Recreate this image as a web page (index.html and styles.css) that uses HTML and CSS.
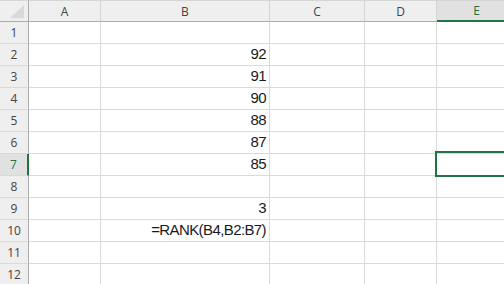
FILE: index.html
```html
<!DOCTYPE html>
<html lang="en">
<head>
  <meta charset="UTF-8" />
  <title>Sheet1</title>
  <link rel="stylesheet" href="styles.css">
</head>
<body>

  <div class="sheet">
    <!-- column headers -->
    <div class="corner">
      <svg width="15" height="14" viewBox="0 0 15 14"><polygon points="14,0 14,13 0,13" fill="#d9d9d9"/></svg>
    </div>
    <div class="col-head">A</div>
    <div class="col-head">B</div>
    <div class="col-head">C</div>
    <div class="col-head">D</div>
    <div class="col-head active">E</div>

    <div class="row-head">1</div><div class="cell"></div><div class="cell"></div><div class="cell"></div><div class="cell"></div><div class="cell"></div>
    <div class="row-head">2</div><div class="cell"></div><div class="cell num">92</div><div class="cell"></div><div class="cell"></div><div class="cell"></div>
    <div class="row-head">3</div><div class="cell"></div><div class="cell num">91</div><div class="cell"></div><div class="cell"></div><div class="cell"></div>
    <div class="row-head">4</div><div class="cell"></div><div class="cell num">90</div><div class="cell"></div><div class="cell"></div><div class="cell"></div>
    <div class="row-head">5</div><div class="cell"></div><div class="cell num">88</div><div class="cell"></div><div class="cell"></div><div class="cell"></div>
    <div class="row-head">6</div><div class="cell"></div><div class="cell num">87</div><div class="cell"></div><div class="cell"></div><div class="cell"></div>
    <div class="row-head active">7</div><div class="cell"></div><div class="cell num">85</div><div class="cell"></div><div class="cell"></div><div class="cell selected"></div>
    <div class="row-head">8</div><div class="cell"></div><div class="cell"></div><div class="cell"></div><div class="cell"></div><div class="cell"></div>
    <div class="row-head">9</div><div class="cell"></div><div class="cell num">3</div><div class="cell"></div><div class="cell"></div><div class="cell"></div>
    <div class="row-head">10</div><div class="cell"></div><div class="cell num">=RANK(B4,B2:B7)</div><div class="cell"></div><div class="cell"></div><div class="cell"></div>
    <div class="row-head">11</div><div class="cell"></div><div class="cell"></div><div class="cell"></div><div class="cell"></div><div class="cell"></div>
    <div class="row-head">12</div><div class="cell"></div><div class="cell"></div><div class="cell"></div><div class="cell"></div><div class="cell"></div>
  </div>

</body>
</html>
```

FILE: styles.css
```css
* {
  margin: 0;
  padding: 0;
  box-sizing: border-box;
}

body {
  background: #fff;
  width: 504px;
  height: 284px;
  overflow: hidden;
  font-family: 'Liberation Sans', Arial, sans-serif;
}

.sheet {
  display: grid;
  grid-template-columns: 29px 72px 169px 95px 72px 80px;
  grid-template-rows: 22px;
  grid-auto-rows: 22px;
}

/* headers */
.corner,
.col-head {
  background: #efefef;
  border-top: 1px solid #d6d6d6;
  border-bottom: 1px solid #ababab;
}

.corner {
  border-right: 1px solid #ababab;
  display: flex;
  align-items: flex-end;
  justify-content: flex-end;
  padding: 0 3px 2px 0;
}

.corner svg {
  display: block;
}

.col-head {
  border-right: 1px solid #d4d4d4;
  display: flex;
  align-items: center;
  justify-content: center;
  font-family: 'Open Sans', sans-serif;
  font-size: 12px;
  color: #444;
}

.col-head.active {
  background: #e1e1e1;
  border-bottom: 2px solid #217346;
  color: #217346;
}

.row-head {
  background: #efefef;
  border-right: 1px solid #ababab;
  border-bottom: 1px solid #d9d9d9;
  display: flex;
  align-items: center;
  justify-content: center;
  font-family: 'Open Sans', sans-serif;
  font-size: 12px;
  color: #444;
}

.row-head.active {
  background: #e1e1e1;
  border-right: 2px solid #217346;
  color: #217346;
}

/* cells */
.cell {
  border-right: 1px solid #dadada;
  border-bottom: 1px solid #dadada;
  font-size: 15px;
  letter-spacing: -0.6px;
  color: #1a1a1a;
  display: flex;
  align-items: flex-end;
  white-space: nowrap;
}

.cell.num {
  justify-content: flex-end;
  padding: 0 3px 2px 0;
  line-height: 18px;
}

.cell.selected {
  position: relative;
}

.cell.selected::after {
  content: "";
  position: absolute;
  left: -2px;
  top: -3px;
  right: -4px;
  bottom: -2px;
  border: 2px solid #217346;
}
```
